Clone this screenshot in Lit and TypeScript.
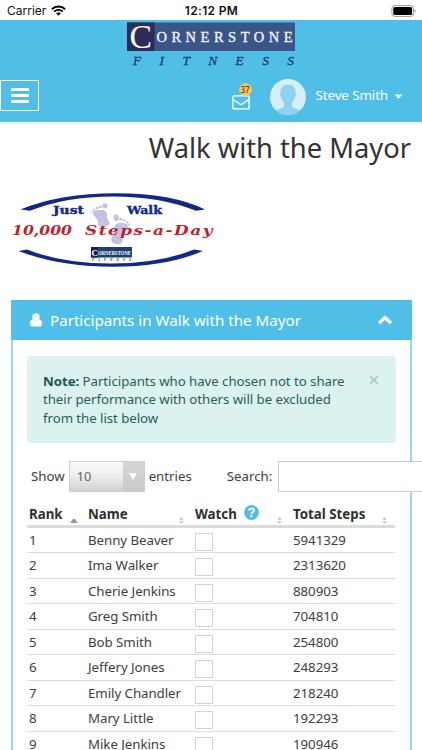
import { LitElement, html, css, svg } from 'lit';
import { customElement, property, state } from 'lit/decorators.js';

interface Participant {
  rank: number;
  name: string;
  steps: number;
}

const PARTICIPANTS: Participant[] = [
  { rank: 1, name: 'Benny Beaver', steps: 5941329 },
  { rank: 2, name: 'Ima Walker', steps: 2313620 },
  { rank: 3, name: 'Cherie Jenkins', steps: 880903 },
  { rank: 4, name: 'Greg Smith', steps: 704810 },
  { rank: 5, name: 'Bob Smith', steps: 254800 },
  { rank: 6, name: 'Jeffery Jones', steps: 248293 },
  { rank: 7, name: 'Emily Chandler', steps: 218240 },
  { rank: 8, name: 'Mary Little', steps: 192293 },
  { rank: 9, name: 'Mike Jenkins', steps: 190946 },
];

@customElement('status-bar')
export class StatusBar extends LitElement {
  static styles = css`
    :host {
      display: grid;
      grid-template-columns: 1fr auto 1fr;
      align-items: center;
      height: 20px;
      box-sizing: border-box;
      padding: 1px 6px 0 7px;
      background: #fff;
      color: #111;
      font: 12px/19px Inter, sans-serif;
    }

    .carrier {
      display: flex;
      align-items: center;
      gap: 5px;
    }

    .time {
      font-weight: 600;
      font-size: 12px;
      letter-spacing: 0.32px;
    }

    .battery {
      justify-self: end;
      display: block;
    }
  `;

  render() {
    return html`
      <div class="carrier">
        <span>Carrier</span>
        <svg width="15" height="11" viewBox="0 0 15 11">
          <path d="M0.9 4.2a9.6 9.6 0 0 1 13.2 0" fill="none" stroke="#000" stroke-width="2" />
          <path d="M3.2 6.6a6.2 6.2 0 0 1 8.6 0" fill="none" stroke="#000" stroke-width="1.9" />
          <path d="M5.1 8.3a3.5 3.5 0 0 1 4.8 0L7.5 10.8z" />
        </svg>
      </div>
      <span class="time">12:12 PM</span>
      <svg class="battery" width="26" height="12" viewBox="0 0 26 12">
        <rect x="1.9" y="0.6" width="21.6" height="10.8" rx="2.8" fill="none" stroke="#999" />
        <rect x="3.3" y="2" width="18.8" height="8" rx="1.5" />
        <path d="M24.6 4.2q1.2.5 1.2 1.8t-1.2 1.8z" fill="#999" />
      </svg>
    `;
  }
}

@customElement('site-header')
export class SiteHeader extends LitElement {
  @property({ type: String }) user = '';

  @property({ type: Number }) unread = 0;

  static styles = css`
    :host {
      display: flex;
      flex-direction: column;
      height: 102px;
      background: #4fbfe8;
      color: #fff;
    }

    .logo {
      display: block;
      overflow: visible;
      margin: 2px 0 0 127px;
    }

    .bar {
      display: flex;
      align-items: flex-start;
      margin-top: 11px;
      height: 36px;
    }

    .menu {
      box-sizing: border-box;
      width: 39px;
      height: 31px;
      margin: 1px 0 0;
      padding: 0;
      border: 1px solid #fff;
      background: none;
      display: grid;
      place-items: center;
    }

    .menu svg {
      display: block;
    }

    .mail {
      position: relative;
      margin: 16px 0 0 auto;
      width: 18px;
      height: 15px;
    }

    .mail svg {
      display: block;
    }

    .count {
      position: absolute;
      left: 7px;
      top: -12px;
      width: 13px;
      height: 13px;
      border-radius: 50%;
      background: #fbc259;
      color: #333;
      font: 8px/13px 'Noto Sans', sans-serif;
      text-align: center;
    }

    .avatar {
      margin-left: 20px;
      display: block;
    }

    .user {
      display: flex;
      align-items: center;
      gap: 6px;
      margin: 6px 19px 0 10px;
      font: 13.4px/20px 'Noto Sans', sans-serif;
      letter-spacing: -0.12px;
    }

    .user svg {
      margin-top: 3px;
    }
  `;

  render() {
    return html`
      <svg class="logo" width="168" height="46" viewBox="0 0 168 46">
        <rect y="0.5" width="168" height="28.5" fill="#3a5588" />
        <rect y="0.5" width="27.5" height="28.5" fill="#2b2c58" />
        <g font-family="'Liberation Serif', serif" fill="#f4f5fb">
          <text x="2.5" y="26" font-size="34" textLength="22.5" lengthAdjust="spacingAndGlyphs">C</text>
          <text x="29.5" y="19.5" font-size="14.5" textLength="136" stroke="#f4f5fb" stroke-width="0.3">ORNERSTONE</text>
          <text x="6" y="42.5" font-size="13.5" font-style="italic" textLength="161" fill="#223c70" stroke="#223c70" stroke-width="0.3">FITNESS</text>
        </g>
      </svg>
      <div class="bar">
        <button class="menu" aria-label="Menu">
          <svg width="18" height="15" viewBox="0 0 18 15" fill="#fff">
            <rect width="18" height="3" rx="0.5" />
            <rect y="6" width="18" height="3" rx="0.5" />
            <rect y="12" width="18" height="3" rx="0.5" />
          </svg>
        </button>
        <div class="mail">
          <svg width="18" height="15" viewBox="0 0 18 15" fill="none" stroke="#fff" stroke-width="1.3">
            <rect x="0.9" y="0.9" width="16.2" height="13" rx="1" />
            <path d="M1 4.2L7.6 9q1.4 1 2.8 0L17 4.2" />
          </svg>
          <span class="count">${this.unread}</span>
        </div>
        <svg class="avatar" width="36" height="36" viewBox="0 0 36 36">
          <circle cx="18" cy="18" r="18" fill="#d4effa" />
          <path d="M18 5.5c-5 0-8 3.3-7.6 8.5-.9.7-.1 4 .9 4.6.4 2.6 1.5 4.3 2.7 5.6v3.3C12.5 30 8.5 30 5.8 31.3A18 18 0 0 0 30.2 31.3C27.5 30 23.5 30 22 27.5v-3.3c1.2-1.3 2.3-3 2.7-5.6 1-.6 1.8-3.9.9-4.6C26 8.8 23 5.5 18 5.5z" fill="#8fd3ee" />
        </svg>
        <div class="user">
          <span>${this.user}</span>
          <svg width="9" height="5" viewBox="0 0 9 5"><path d="M0.5 0.5h8L4.5 4.8z" fill="#fff" /></svg>
        </div>
      </div>
    `;
  }
}

@customElement('challenge-badge')
export class ChallengeBadge extends LitElement {
  static styles = css`
    :host,
    svg {
      display: block;
    }
  `;

  private foot() {
    return svg`
      <path d="M4 9C1 10 0 13 2 16c2 4 3 6 3 11 0 5 3 6 6 5 4-1 5-4 3-9-2-4 0-7-1-10C12 9 8 8 4 9z" />
      <ellipse cx="12" cy="3.8" rx="2.3" ry="3.4" />
      <circle cx="8" cy="4.8" r="1.5" />
      <circle cx="4.9" cy="6" r="1.3" />
      <circle cx="2.2" cy="7.8" r="1.2" />
      <circle cx="0.2" cy="10" r="1" />
    `;
  }

  render() {
    return html`
      <svg width="206" height="76" viewBox="10 192 206 76">
        <g fill="#12278a">
          <path d="M20.5 209.5Q60 193.3 116 193.3T205 209.5L196 210.8Q160 196.5 113 196.5T30 210.8z" />
          <path d="M18.5 251Q60 266.8 113 266.8T203 251L194 249.5Q160 263.5 111 263.5T27 249.5z" />
        </g>
        <g fill="#c5c1e2">
          <g transform="translate(91 204) rotate(-4) scale(1.15 0.74)">${this.foot()}</g>
          <g transform="translate(113 214) rotate(4) scale(1.15 0.93) translate(15 0) scale(-1 1)">${this.foot()}</g>
        </g>
        <g font-family="'DejaVu Serif', serif" font-weight="bold" font-size="11.5" fill="#152a86" stroke="#152a86" stroke-width="0.4">
          <text x="53" y="213.5" textLength="31" lengthAdjust="spacingAndGlyphs">Just</text>
          <text x="127" y="213.5" textLength="35" lengthAdjust="spacingAndGlyphs">Walk</text>
        </g>
        <g font-family="'DejaVu Serif', serif" font-weight="bold" font-style="italic" font-size="13.5" fill="#c01f2b">
          <text x="12" y="235" textLength="60" lengthAdjust="spacingAndGlyphs">10,000</text>
          <text x="85" y="235" letter-spacing="1.2" textLength="129" lengthAdjust="spacingAndGlyphs">Steps-a-Day</text>
        </g>
        <rect x="91" y="247" width="41" height="10.5" fill="#1c4170" />
        <rect x="91" y="247" width="7" height="10.5" fill="#182050" />
        <g font-family="'Liberation Serif', serif" font-weight="bold" fill="#fff">
          <text x="91.5" y="255.5" font-size="9">C</text>
          <text x="98" y="254.5" font-size="6" textLength="33" lengthAdjust="spacingAndGlyphs">ORNERSTONE</text>
          <text x="92" y="260.5" font-size="3.5" font-style="italic" textLength="39" fill="#222">FITNESS</text>
        </g>
      </svg>
    `;
  }
}

@customElement('participants-table')
export class ParticipantsTable extends LitElement {
  @property({ attribute: false }) rows: Participant[] = [];

  static styles = css`
    :host {
      display: block;
      color: #404040;
      font: 13.3px/18px 'Noto Sans', sans-serif;
      letter-spacing: -0.06px;
    }

    .row {
      display: grid;
      grid-template-columns: 59px 107px 98px 1fr;
      box-sizing: border-box;
      height: 25.45px;
      padding: 3px 2px 0;
      border-bottom: 1px solid #dcdcdc;
    }

    .head {
      height: 27.5px;
      padding-top: 4px;
      border-bottom: 3px solid #dcdcdc;
      color: #2f2f2f;
      font-weight: bold;
      letter-spacing: 0;
    }

    .head > span {
      display: flex;
      align-items: flex-start;
    }

    .sort {
      margin: 12px 11px 0 auto;
    }

    .sort.up {
      margin-right: 10px;
      margin-top: 14px;
    }

    .sort.last {
      margin-right: 6px;
    }

    .help {
      margin: 0 0 0 7px;
    }

    .box {
      box-sizing: border-box;
      width: 18px;
      height: 18px;
      margin: 2px 0 0 0;
      border: 1px solid #d3d3d3;
      background: #fff;
    }
  `;

  private sortIcon(extra = '') {
    return html`
      <svg class="sort ${extra}" width="5" height="7" viewBox="0 0 5 7" fill="#bdbdbd">
        <path d="M0.3 2.8L2.5 0.3 4.7 2.8zM0.3 4.2L2.5 6.7 4.7 4.2z" />
      </svg>
    `;
  }

  render() {
    return html`
      <div class="row head">
        <span>
          Rank
          <svg class="sort up" width="8" height="4" viewBox="0 0 8 4"><path d="M0 4L3 0h2l3 4z" fill="#999" /></svg>
        </span>
        <span>Name ${this.sortIcon()}</span>
        <span>
          Watch
          <svg class="help" width="15" height="15" viewBox="0 0 15 15">
            <circle cx="7.5" cy="7.5" r="7.4" fill="#4fbfe8" />
            <path d="M5 5.5Q5.3 3.5 7.6 3.5T10 5.5Q10 6.7 8.6 7.3 7.5 7.9 7.5 9" fill="none" stroke="#fff" stroke-width="2" />
            <rect x="6.5" y="10.1" width="2" height="2" fill="#fff" />
          </svg>
          ${this.sortIcon()}
        </span>
        <span>Total Steps ${this.sortIcon('last')}</span>
      </div>
      ${this.rows.map(
        (row) => html`
          <div class="row">
            <span>${row.rank}</span>
            <span>${row.name}</span>
            <div class="box"></div>
            <span>${row.steps}</span>
          </div>
        `
      )}
    `;
  }
}

@customElement('app-root')
export class AppRoot extends LitElement {
  @state() private participants = PARTICIPANTS;

  static styles = css`
    :host {
      display: block;
      width: 422px;
      height: 750px;
      overflow: hidden;
      background: #fff;
      color: #404040;
      font: 13.25px/18.3px 'Noto Sans', sans-serif;
    }

    h1 {
      margin: 7px 11px 0 0;
      color: #333;
      font-size: 27.3px;
      line-height: 38px;
      font-weight: 400;
      text-align: right;
    }

    challenge-badge {
      margin: 25px 0 0 10px;
    }

    .panel {
      box-sizing: border-box;
      width: 401px;
      height: 480px;
      margin: 32px 0 0 10.5px;
      border: solid #9dd7eb;
      border-width: 0 2px;
    }

    .title {
      display: flex;
      align-items: center;
      height: 40px;
      margin: 0 -2px;
      padding: 0 19px 0 19.5px;
      background: #4fbfe8;
      color: #fff;
      font-size: 15.15px;
    }

    .title .chevron {
      margin-left: auto;
    }

    .title .person {
      margin-right: 8px;
    }

    .note {
      display: flex;
      justify-content: space-between;
      box-sizing: border-box;
      width: 369px;
      height: 87px;
      margin: 15.5px 0 0 14.5px;
      padding: 16.5px 17px 0 16px;
      border-radius: 4px;
      background: #dcf2f0;
      color: #285e59;
    }

    .note p {
      margin: 0;
      width: 312px;
      letter-spacing: -0.05px;
    }

    .note b {
      color: #1d564f;
    }

    .note svg {
      margin-top: 3px;
    }

    .controls {
      display: flex;
      align-items: center;
      width: 420px;
      height: 31px;
      margin: 18px 0 0 18.5px;
    }

    .select {
      display: flex;
      align-items: center;
      justify-content: space-between;
      box-sizing: border-box;
      width: 76px;
      height: 31px;
      margin: 0 4px;
      padding-left: 7px;
      border: 1px solid #cfcfcf;
      background: linear-gradient(#fafafa, #ededed 50%, #d2d2d2);
      color: #666;
      font-size: 12.8px;
    }

    .arrow {
      display: grid;
      place-items: center;
      width: 21px;
      height: 29px;
      background: linear-gradient(#d6d6d6, #c9c9c9);
    }

    .search {
      margin-left: 35px;
    }

    input {
      box-sizing: border-box;
      width: 170px;
      height: 31px;
      margin: 0 0 0 6px;
      border: 1px solid #ccc;
      border-radius: 0;
      background: #fff;
      flex: none;
    }

    participants-table {
      width: 368px;
      margin: 9px 0 0 14.5px;
    }
  `;

  render() {
    return html`
      <status-bar></status-bar>
      <site-header user="Steve Smith" unread="37"></site-header>
      <h1>Walk with the Mayor</h1>
      <challenge-badge></challenge-badge>
      <section class="panel">
        <div class="title">
          <svg class="person" width="12" height="14" viewBox="0 0 12 14" fill="#fff">
            <circle cx="6" cy="3.9" r="3.7" />
            <path d="M2.2 6.2Q0 6.6 0 11q0 2.5 2.3 2.5h7.4Q12 13.5 12 11q0-4.4-2.2-4.8Q8 7.6 6 7.600T2.2 6.2z" />
          </svg>
          <span>Participants in Walk with the Mayor</span>
          <svg class="chevron" width="16" height="10" viewBox="0 0 16 10">
            <path d="M2 8.3L8 2.5l6 5.8" fill="none" stroke="#fff" stroke-width="3.3" />
          </svg>
        </div>
        <div class="note">
          <p>
            <b>Note:</b> Participants who have chosen not to share their
            performance with others will be excluded from the list below
          </p>
          <svg width="10" height="10" viewBox="0 0 10 10">
            <path d="M1.2 1.2l7.6 7.6M8.8 1.2L1.2 8.8" stroke="#b4cdca" stroke-width="2" />
          </svg>
        </div>
        <div class="controls">
          <span>Show</span>
          <div class="select">
            <span>10</span>
            <span class="arrow">
              <svg width="8" height="7" viewBox="0 0 8 7"><path d="M0 0h8L4 7z" fill="#fff" /></svg>
            </span>
          </div>
          <span>entries</span>
          <span class="search">Search:</span>
          <input type="text" aria-label="Search" />
        </div>
        <participants-table .rows=${this.participants}></participants-table>
      </section>
    `;
  }
}
